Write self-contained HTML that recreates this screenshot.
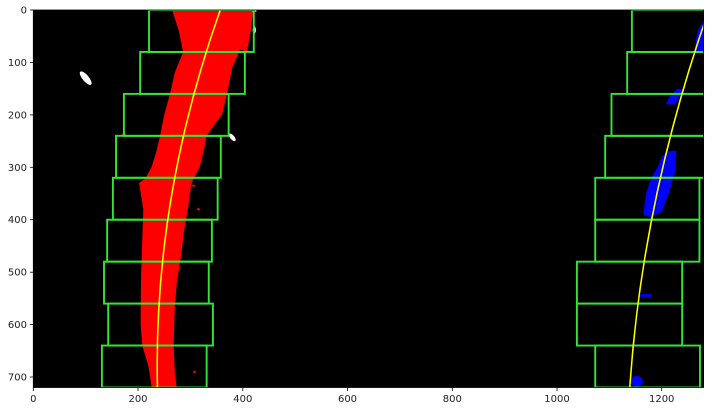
<!DOCTYPE html>
<html><head><style>
html,body{margin:0;padding:0;background:#fff;width:713px;height:411px;overflow:hidden}
svg{display:block}
text{font-family:"DejaVu Sans","Liberation Sans",sans-serif;font-size:10px;fill:#222}
</style></head><body>
<svg width="713" height="411" viewBox="0 0 713 411">
<rect x="33.3" y="10" width="670.3" height="377.5" fill="#000"/>
<g transform="translate(33.3,10) scale(0.5237,0.5243)">
<polygon fill="#f00" points="265,0 420,0 415,40 408,80 395,75 380,110 370,160 360,200 345,220 331,240 325,270 318,299 302,330 295,380 288,420 282,470 274,520 270,572 268,640 270,690 274,720 226,720 220,680 208,640 205,600 205,572 206,500 208,440 210,380 202,330 215,320 226,299 235,270 242,240 250,200 261,160 270,120 286,80 278,40"/>
<ellipse cx="306" cy="335" rx="3" ry="2" fill="#f00"/>
<ellipse cx="173" cy="238" rx="4" ry="3" fill="#f00"/>
<ellipse cx="315" cy="380" rx="3" ry="2" fill="#f00"/>
<ellipse cx="308" cy="690" rx="3" ry="2" fill="#f00"/>
<ellipse cx="100" cy="130" rx="6" ry="16" transform="rotate(-40 100 130)" fill="#fff"/>
<ellipse cx="380" cy="243" rx="4" ry="9" transform="rotate(-40 380 243)" fill="#fff"/>
<rect x="418" y="0" width="8" height="3" fill="#fff"/>
<ellipse cx="422" cy="38" rx="3" ry="7" fill="#fff"/>
<polygon fill="#00f" points="1268,40 1280,20 1280,80 1262,80"/>
<polygon fill="#00f" points="1215,165 1230,150 1242,152 1225,180 1208,180"/>
<polygon fill="#00f" points="1200,280 1212,270 1228,268 1225,310 1215,345 1200,385 1178,395 1165,390 1170,350 1180,320 1192,300"/>
<rect x="1158" y="542" width="22" height="5" fill="#00f"/>
<ellipse cx="1152" cy="708" rx="12" ry="10" fill="#00f"/>
<g fill="none" stroke="#33e633" stroke-width="3.6">
<rect x="221" y="0" width="200" height="80"/>
<rect x="204" y="80" width="200" height="80"/>
<rect x="173" y="160" width="200" height="80"/>
<rect x="158" y="240" width="200" height="80"/>
<rect x="152" y="320" width="200" height="80"/>
<rect x="141" y="400" width="200" height="80"/>
<rect x="135" y="480" width="200" height="80"/>
<rect x="143" y="560" width="200" height="80"/>
<rect x="131" y="640" width="200" height="80"/>
<rect x="1143" y="0" width="200" height="80"/>
<rect x="1134" y="80" width="200" height="80"/>
<rect x="1104" y="160" width="200" height="80"/>
<rect x="1092" y="240" width="200" height="80"/>
<rect x="1073" y="320" width="199" height="80"/>
<rect x="1073" y="400" width="199" height="80"/>
<rect x="1038" y="480" width="201" height="80"/>
<rect x="1038" y="560" width="201" height="80"/>
<rect x="1073" y="640" width="200" height="80"/>
</g>
<g fill="none" stroke="#ffff00" stroke-width="3">
<path d="M357,0 Q229,360 237,720"/>
<path d="M1290,0 Q1163,360 1139,720"/>
</g>
</g>
<rect x="0" y="0" width="33.3" height="411" fill="#fff"/>
<rect x="703.6" y="0" width="10" height="411" fill="#fff"/>
<rect x="0" y="0" width="713" height="10" fill="#fff"/>
<rect x="0" y="387.5" width="713" height="24" fill="#fff"/>
<rect x="33.3" y="10" width="670.3" height="377.5" fill="none" stroke="#000" stroke-width="0.8"/>
<g stroke="#000" stroke-width="0.8">
<line x1="33.3" y1="387.5" x2="33.3" y2="391"/><line x1="138" y1="387.5" x2="138" y2="391"/><line x1="242.8" y1="387.5" x2="242.8" y2="391"/><line x1="347.5" y1="387.5" x2="347.5" y2="391"/><line x1="452.3" y1="387.5" x2="452.3" y2="391"/><line x1="557" y1="387.5" x2="557" y2="391"/><line x1="661.7" y1="387.5" x2="661.7" y2="391"/>
<line x1="30" y1="10" x2="33.3" y2="10"/><line x1="30" y1="62.4" x2="33.3" y2="62.4"/><line x1="30" y1="114.9" x2="33.3" y2="114.9"/><line x1="30" y1="167.3" x2="33.3" y2="167.3"/><line x1="30" y1="219.7" x2="33.3" y2="219.7"/><line x1="30" y1="272.2" x2="33.3" y2="272.2"/><line x1="30" y1="324.6" x2="33.3" y2="324.6"/><line x1="30" y1="377" x2="33.3" y2="377"/>
</g>
<g text-anchor="middle">
<text x="33.3" y="402">0</text><text x="138" y="402">200</text><text x="242.8" y="402">400</text><text x="347.5" y="402">600</text><text x="452.3" y="402">800</text><text x="557" y="402">1000</text><text x="661.7" y="402">1200</text>
</g>
<g text-anchor="end">
<text x="27" y="13.5">0</text><text x="27" y="66">100</text><text x="27" y="118.4">200</text><text x="27" y="170.8">300</text><text x="27" y="223.2">400</text><text x="27" y="275.7">500</text><text x="27" y="328.1">600</text><text x="27" y="380.5">700</text>
</g>
</svg>
</body></html>
